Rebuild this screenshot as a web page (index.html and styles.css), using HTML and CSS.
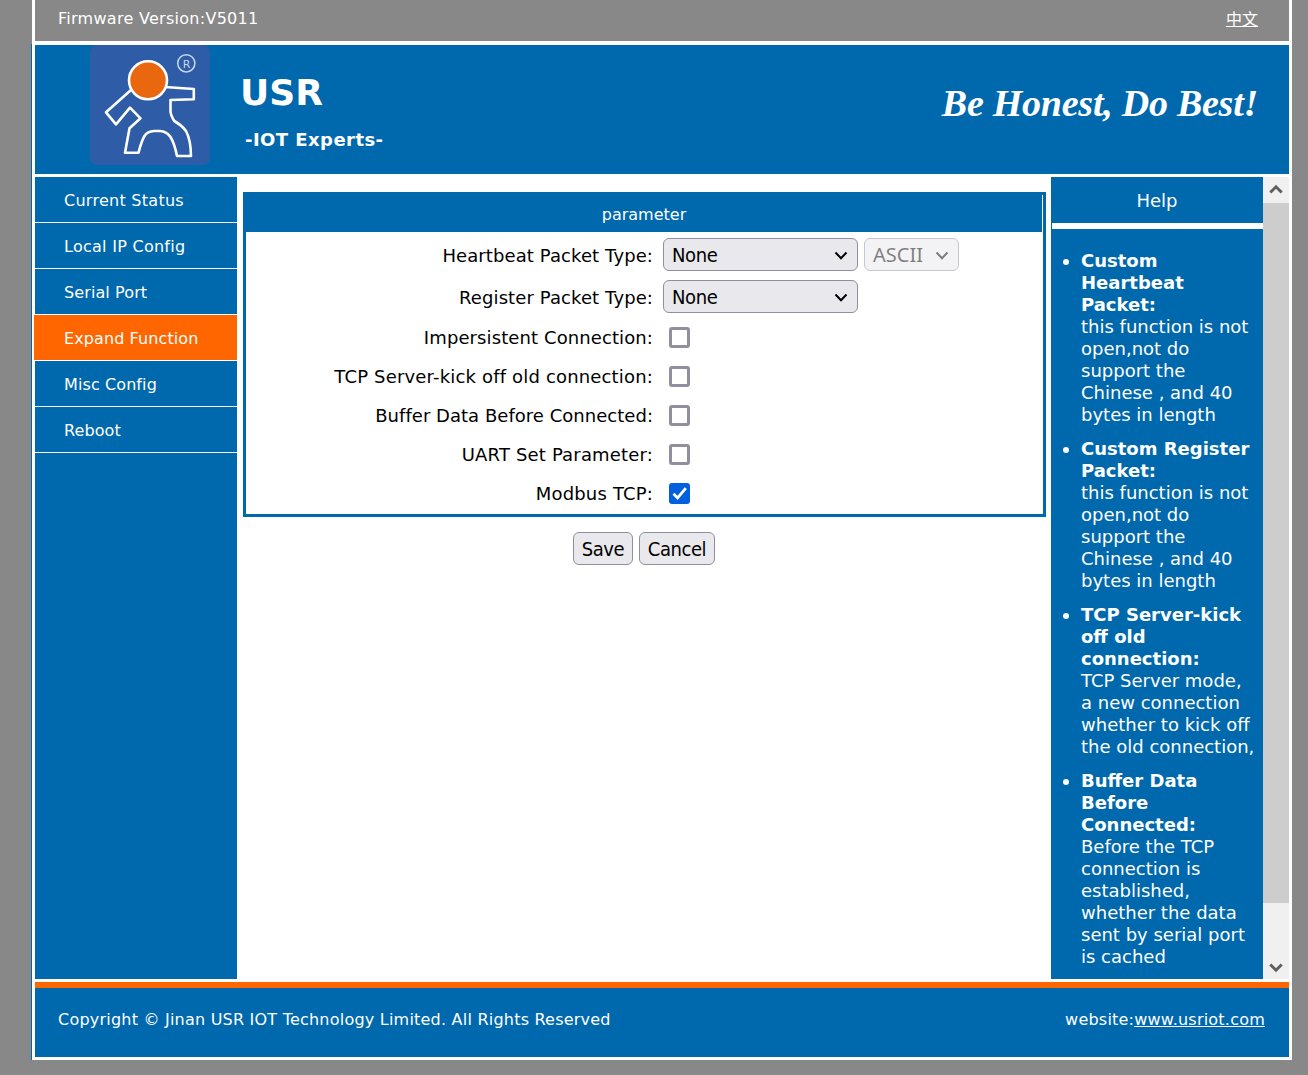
FILE: index.html
```html
<!DOCTYPE html>
<html lang="en">
<head>
<meta charset="utf-8">
<title>USR IOT Experts</title>
<link rel="stylesheet" href="styles.css">
</head>
<body>
<div class="page">
  <div class="topbar"><span>Firmware Version:V5011</span><a class="lang" href="#">中文</a></div>
  <header class="header">
    <svg class="logo" viewBox="0 0 120 120" width="120" height="120">
      <rect width="120" height="120" rx="7" fill="#2e5ca6"/>
      <g fill="none" stroke="#fff" stroke-width="2.6" stroke-linejoin="round">
        <path d="M41 45 L16 67.300 L26 79.300 L40 62.700 L50.500 73.300 L39.500 83.300 L35 107.700 H48.500 Q51.500 96 54.500 91 Q57.500 86.300 64 86 H70 Q76.500 86.300 80.500 92 Q84.500 98.500 87 111 H101 Q100.800 95 96 86 Q91.500 80 84.300 76 Q80.500 70 80.500 66 V55 L103.800 54.300 V44 L75 42"/>
        <circle cx="58" cy="35.300" r="19" fill="#e9680f"/>
        <circle cx="96.300" cy="18.300" r="8.600" stroke="#c9d8ee" stroke-width="1.500"/>
      </g>
      <text class="reg" x="96.500" y="22.500" text-anchor="middle">R</text>
    </svg>
    <div class="brand"><span class="brand-name">USR</span><span class="brand-sub">-IOT Experts-</span></div>
    <div class="slogan">Be Honest, Do Best!</div>
  </header>
  <main class="main">
    <nav class="nav">
      <a class="nav-item wide">Current Status</a>
      <a class="nav-item wide">Local IP Config</a>
      <a class="nav-item">Serial Port</a>
      <a class="nav-item active">Expand Function</a>
      <a class="nav-item">Misc Config</a>
      <a class="nav-item">Reboot</a>
    </nav>
    <section class="content">
      <div class="panel">
        <div class="panel-title">parameter</div>
        <div class="row select-row"><label>Heartbeat Packet Type:</label>
          <div class="select"><span>None</span><svg width="14" height="9" viewBox="0 0 14 9"><path d="M1.500 1.500 L7 7.200 L12.500 1.500"/></svg></div>
          <div class="select small"><span>ASCII</span><svg width="14" height="9" viewBox="0 0 14 9"><path d="M1.500 1.500 L7 7.200 L12.500 1.500"/></svg></div></div>
        <div class="row select-row"><label>Register Packet Type:</label>
          <div class="select"><span>None</span><svg width="14" height="9" viewBox="0 0 14 9"><path d="M1.500 1.500 L7 7.200 L12.500 1.500"/></svg></div></div>
        <div class="checks">
          <div class="row"><label>Impersistent Connection:</label><span class="check"></span></div>
          <div class="row"><label class="wide">TCP Server-kick off old connection:</label><span class="check"></span></div>
          <div class="row"><label class="tight">Buffer Data Before Connected:</label><span class="check"></span></div>
          <div class="row"><label class="wide">UART Set Parameter:</label><span class="check"></span></div>
          <div class="row"><label class="wide">Modbus TCP:</label><span class="check on"><svg width="21" height="21" viewBox="0 0 21 21"><path d="M4.500 10.800 L8.600 15 L16.800 5.200"/></svg></span></div>
        </div>
      </div>
      <div class="buttons"><button class="save">Save</button><button class="cancel">Cancel</button></div>
    </section>
    <aside class="help">
      <h2 class="help-title">Help</h2>
      <ul class="help-list">
        <li><b>Custom<br>Heartbeat<br>Packet:</b><br>this function is not<br>open,not do<br>support the<br>Chinese , and 40<br>bytes in length</li>
        <li><b>Custom Register<br>Packet:</b><br>this function is not<br>open,not do<br>support the<br>Chinese , and 40<br>bytes in length</li>
        <li><b>TCP Server-kick<br>off old<br>connection:</b><br>TCP Server mode,<br>a new connection<br>whether to kick off<br>the old connection,</li>
        <li><b>Buffer Data<br>Before<br>Connected:</b><br>Before the TCP<br>connection is<br>established,<br>whether the data<br>sent by serial port<br>is cached</li>
      </ul>
    </aside>
    <div class="scrollbar">
      <svg class="arrow" width="26" height="26" viewBox="0 0 26 26"><path d="M7.300 15.500 L13 9.800 L18.700 15.500"/></svg>
      <div class="thumb"></div>
      <svg class="arrow down" width="26" height="26" viewBox="0 0 26 26"><path d="M7.300 11.500 L13 17.200 L18.700 11.500"/></svg>
    </div>
  </main>
  <footer class="footer"><span>Copyright © Jinan USR IOT Technology Limited. All Rights Reserved</span><span>website:<a href="#">www.usriot.com</a></span></footer>
</div>
</body>
</html>
```
FILE: styles.css
```css
* { box-sizing: border-box; }
body {
  margin: 0;
  height: 1075px;
  overflow: hidden;
  background: #888;
  color: #fff;
  font: 16px/22px "DejaVu Sans", "Noto Sans CJK SC", sans-serif;
}
a { color: inherit; }
.page {
  position: relative;
  width: 1260px;
  height: 1060px;
  margin-left: 32px;
  padding: 0 3px 3px;
  background: #fff;
  display: flex;
  flex-direction: column;
}
/* thin blue edge left of the white frame */
.page::before {
  content: "";
  position: absolute;
  left: -1px;
  top: 44px;
  bottom: 0;
  width: 1px;
  background: #0068ad;
}
.topbar {
  height: 41px;
  padding: 0 31px 4px 23px;
  background: #888;
  display: flex;
  align-items: center;
  justify-content: space-between;
  letter-spacing: .28px;
}
.lang { letter-spacing: 0; padding-top: 2px; }
.header {
  height: 129px;
  margin: 4px 0 3px;
  padding-left: 55px;
  background: #0068ad;
  display: flex;
  align-items: flex-start;
}
.reg { font: 11px "DejaVu Sans", sans-serif; fill: #c9d8ee; }
.brand { display: flex; flex-direction: column; margin-left: 30px; padding-top: 25px; font-weight: bold; }
.brand-name { font-size: 36px; line-height: 46px; }
.brand-sub { font-size: 18px; line-height: 22px; margin: 13px 0 0 5px; letter-spacing: .45px; }
.slogan { margin: 35px 31px 0 auto; font: italic bold 38px/46px "Liberation Serif", serif; letter-spacing: -.25px; }
.main { height: 802px; display: flex; background: #fff; }
.nav { width: 202px; background: #0068ad; }
.nav-item { display: flex; align-items: center; height: 46px; padding: 2px 0 0 29px; border-bottom: 1px solid #fff; letter-spacing: .1px; }
.nav-item.wide { letter-spacing: .27px; }
.nav-item.active { margin-left: -1px; padding-left: 30px; background: #f60; }
.content { width: 814px; padding: 15px 5px 0 6px; color: #000; }
.panel { height: 325px; border: 3px solid #0068ad; font-size: 18px; }
.panel-title { height: 37px; margin-right: 1px; padding-top: 2px; background: #0068ad; color: #fff; font-size: 16px; display: flex; align-items: center; justify-content: center; }
.row { display: flex; align-items: center; height: 39px; }
.select-row { height: 42px; padding-top: 3px; }
.select-row label { padding-top: 2px; }
.checks { padding-top: 2px; }
.row label { width: 407px; margin-right: 10px; text-align: right; white-space: nowrap; letter-spacing: .1px; }
.row label.tight { letter-spacing: .03px; }
.row label.wide { letter-spacing: .17px; }
.select {
  width: 195px;
  height: 33px;
  padding: 1px 9px 0 8px;
  border: 1px solid #8f8f9d;
  border-radius: 6px;
  background: #e9e9ed;
  display: flex;
  align-items: center;
  justify-content: space-between;
  font: 20px/28px "DejaVu Sans Condensed", "Noto Sans", sans-serif;
  letter-spacing: -.35px;
}
.select path { fill: none; stroke: currentColor; stroke-width: 2; }
.select.small { width: 95px; margin-left: 6px; opacity: .5; font-family: "Noto Sans", sans-serif; letter-spacing: 0; }
.check { width: 21px; height: 21px; margin-left: 6px; border: 3px solid #8f8f9d; border-radius: 3px; }
.check.on { border: 0; background: #0060df; }
.check svg { display: block; }
.check path { fill: none; stroke: #fff; stroke-width: 2.8; }
.buttons { display: flex; justify-content: center; gap: 6px; padding: 15px 1px 0 0; }
button { height: 33px; padding: 1px 0 0; border: 1px solid #8f8f9d; border-radius: 6px; background: #e9e9ed; color: #000; font: 20px/28px "DejaVu Sans Condensed", "Noto Sans", sans-serif; letter-spacing: -.45px; }
.save { width: 60px; }
.cancel { width: 76px; }
.help { width: 212px; background: #0068ad; font-size: 18px; }
/* the rule under the title starts one pixel in from the column edge */
.help-title { height: 52px; margin: 0; background: linear-gradient(#fff, #fff) 1px 46px / 211px 6px no-repeat; font: 18px/47px "DejaVu Sans", sans-serif; text-align: center; }
.help-list { margin: 0; padding: 21px 0 0 30px; white-space: nowrap; }
.help-list li { margin-bottom: 12px; }
.scrollbar { width: 26px; background: #f0f0f0; display: flex; flex-direction: column; }
.thumb { height: 700px; background: #cdcdcd; }
.arrow path { fill: none; stroke: #606060; stroke-width: 3; }
.arrow.down { margin-top: auto; }
.footer { height: 75px; margin-top: 3px; padding: 0 24px 6px 23px; border-top: 6px solid #f60; background: #0068ad; display: flex; align-items: center; justify-content: space-between; letter-spacing: .22px; }
```
